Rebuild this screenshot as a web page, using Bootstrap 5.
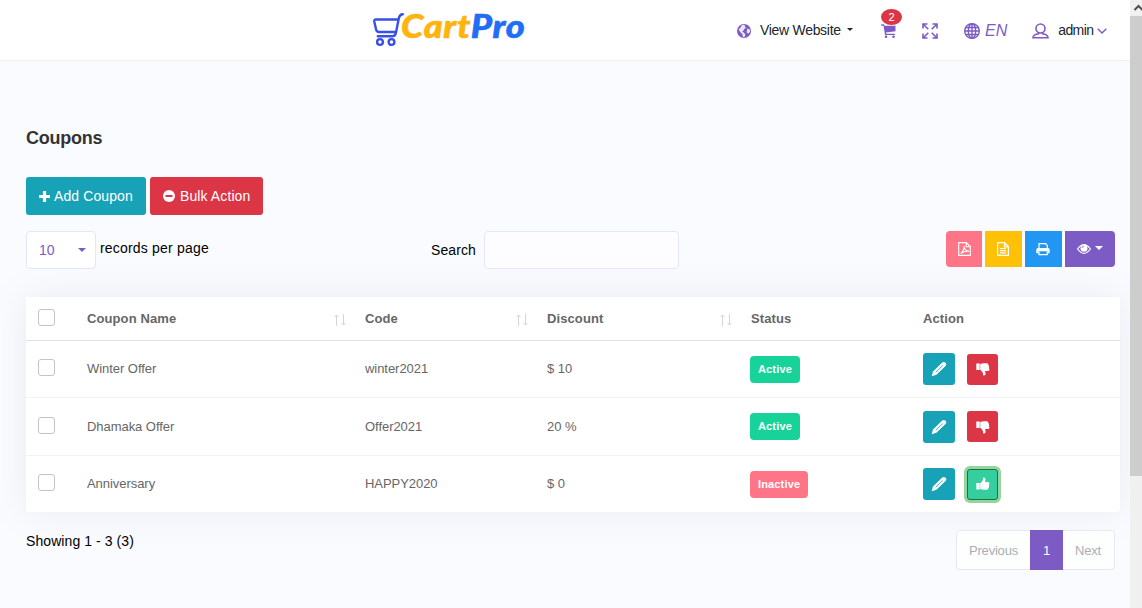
<!DOCTYPE html>
<html lang="en">
<head>
<meta charset="utf-8">
<meta name="viewport" content="width=device-width, initial-scale=1">
<title>Coupons - CartPro</title>
<link href="https://cdn.jsdelivr.net/npm/bootstrap@5.3.0/dist/css/bootstrap.min.css" rel="stylesheet">
<style>
  :root { --violet: #7c5cc4; --teal: #17a2b8; --red: #dc3545; }
  body { font-family: "Liberation Sans", Arial, sans-serif; font-size: 14px; line-height: 20px; height: 608px; overflow: hidden; background: #fafbfe; color: #000; }
  svg { display: block; flex: none; }
  .topbar { height: 61px; border-bottom: 1px solid #eee; background: #fff; padding-left: 373px; color: #212529; }
  .topbar .tools { color: var(--violet); padding-top: 20px; }
  .topbar .label { letter-spacing: -.3px; color: #212529; }
  .logo-text { font: italic 900 32px/34px Lato, sans-serif; letter-spacing: .6px; color: #ffb30d; transform: scaleX(1.13); transform-origin: 0 0; -webkit-text-stroke: .6px currentColor; }
  .logo-text span { color: #1f6ef5; }
  .cart-count { position: absolute; left: 881px; top: 9px; width: 21px; height: 16px; border-radius: 50%; background: var(--red); color: #fff; font-size: 11px; line-height: 16px; text-align: center; }
  .caret { width: 0; height: 0; border: 4px solid transparent; border-top-color: currentColor; border-bottom: 0; }
  .scrollbar { width: 12px; background: #f0f0f0; }
  .scroll-thumb { height: 460px; background: #cdcdcd; }
  .content { padding: 66px 10px 0 26px; }
  h1 { font-size: 18px; line-height: 22px; font-weight: 700; color: #333; margin: 0 0 28px; letter-spacing: -.25px; }
  .btn { --bs-btn-border-radius: 3px; --bs-btn-font-size: 14px; border: 0; color: #fff; }
  .btn-main { height: 38px; padding: 0 13px; letter-spacing: .1px; }
  .bg-teal, .bg-teal:hover { background: var(--teal); }
  .bg-red, .bg-red:hover { background: var(--red); }
  .bg-violet { background: var(--violet); }
  .page-size { width: 70px; height: 38px; border: 1px solid #e4e6fc; border-radius: 4px; background: #fff; color: var(--violet); padding: 0 9px 0 12px; }
  .search-box { width: 195px; height: 38px; border: 1px solid #e4e6fc; border-radius: 4px; background: #fdfdff; }
  .tool { width: 37px; height: 36px; padding: 0; display: flex; align-items: center; justify-content: center; border-radius: 0; }
  .sheet { box-shadow: 0 0 35px rgba(120,130,160,.13); border-radius: 0 0 4px 4px; background: #fff; width: 1094px; }
  .coupons { table-layout: fixed; border-collapse: separate; border-spacing: 0; width: 1094px; margin: 0; font-size: 13px; line-height: 18px; --bs-table-bg: transparent; }
  .coupons th, .coupons td { padding: 0 12px; color: #666; vertical-align: middle; border-bottom: 1px solid #f1f2f4; }
  .coupons th { height: 44px; border-bottom-color: #dee2e6; letter-spacing: .1px; }
  .coupons td { height: 57px; letter-spacing: -.05px; }
  .coupons tbody tr:nth-child(2) td { height: 58px; }
  .coupons tbody tr:last-child td { border-bottom: 0; height: 56px; }
  .tick { display: block; width: 17px; height: 17px; border: 1px solid #c4c4c4; border-radius: 3px; background: #fff; margin-top: -3px; }
  .coupons th .tick { margin-top: -2px; }
  .sorter { margin: 4px -6px 0 0; }
  .state { display: inline-block; height: 27px; line-height: 27px; padding: 0 8px; border-radius: 4px; color: #fff; font-size: 11px; font-weight: 700; margin-left: -1px; vertical-align: middle; letter-spacing: .15px; }
  .act { width: 32px; height: 32px; padding: 0; display: flex; align-items: center; justify-content: center; }
  .act.vote { width: 31px; height: 31px; }
  .act.up { background: #34ce9f; border: 1px solid #1c7430; box-shadow: 0 0 0 3px #93d4a0; }
  .pager { height: 40px; }
  .pager .page-link { height: 40px; padding: 0 12px; line-height: 40px; font-size: 13px; color: #aaaeb3; background: #fdfefe; border-color: #e6e8ee; letter-spacing: -.2px; }
  .pager .page-item:first-child .page-link { width: 75px; border-radius: 4px 0 0 4px; }
  .pager .page-item:last-child .page-link { width: 53px; border-radius: 0 4px 4px 0; }
  .pager .active .page-link { background: var(--violet); border-color: var(--violet); color: #fff; width: 33px; }
</style>
</head>
<body class="d-flex">
<svg width="0" height="0" class="position-absolute">
  <defs>
    <symbol id="pencil" viewBox="0 0 16 16"><path d="M.7 15.200l1.300-4.800L11 1.800q1.800-1.400 3.200-.2l.8.800q.8 1.200-.5 2.700L5.400 13.700z" fill="#fff"/><path d="M4.800 11.200L11.800 4.500" stroke="#17a2b8" stroke-width=".8"/></symbol>
    <symbol id="thumb" viewBox="0 0 14 14"><path d="M.3 6h3.400v6.500H.3zM4.200 6.200Q6 5 7 2.800V1.200Q7 .3 8 .4q1.700.3 1.600 2.200L9 5.100h3q1.600.1 1.500 1.500l-.5.900q.5.900-.1 1.700.3 1-.5 1.700.1 1.800-1.800 1.800H8q-1.700 0-3.800-.7z" fill="#fff"/></symbol>
    <symbol id="sort" viewBox="0 0 14 12"><path d="M3.500 12V1M1.500 3.200L3.500 1l2 2.200M10.500 0v11M8.500 8.800l2 2.200 2-2.200" fill="none" stroke="#d6d6da" stroke-width="1"/></symbol>
  </defs>
</svg>
<div class="flex-grow-1">
  <header class="topbar d-flex position-relative">
    <div class="d-flex" style="width:363px">
      <svg class="mt-2" width="32" height="40" viewBox="0 0 32 40" fill="none" stroke="#3650e8" stroke-width="2.400" stroke-linecap="round" stroke-linejoin="round"><path d="M29.800 6.300q-3.100.1-3.900 3.700L22.800 25.200q-.6 3-3.600 3H4.800M24.300 11.500H3q-2 .1-1.700 2.200l1.800 7.800q.5 2.500 3 2.500h17"/><circle cx="7" cy="34" r="2.900"/><circle cx="18.500" cy="34" r="2.900"/></svg>
      <div class="logo-text" style="margin:9px 0 0 -4px">Cart<span>Pro</span></div>
    </div>
    <div class="tools d-flex align-items-start flex-grow-1">
      <svg style="margin:4px 0 0 1px" width="14" height="14" viewBox="0 0 14 14"><circle cx="7" cy="7" r="7" fill="#7c5cc4"/><path d="M4.500 1.500l2-.7 1.700.8-.5 1.500 1.500.5L7 5.200 6.300 7l-1.500.8 2 .8 1.600 1.800-1 2.800-1.500-.2-.5-2.800L3.200 8 1.600 5.200l1.700-1.300zM10.500 4.500l2 .8.700 2-1.700 2.500-2-1.500z" fill="#fff" opacity=".85"/></svg>
      <span class="label" style="margin-left:9px;width:80px;white-space:nowrap">View Website</span>
      <i class="caret text-dark" style="margin:8px 0 0 7px;border-width:3px 3px 0"></i>
      <svg style="margin:4px 0 0 28px" width="15" height="14" viewBox="0 0 15 14" fill="#7c5cc4"><path d="M0 1Q0 .3.700.3H3l.5 1.500H14.500v5.500L5 8.500l.2 1.300h8.600v1.300H4L2.500 1.700H.7Q0 1.700 0 1z"/><circle cx="5" cy="12.700" r="1.300"/><circle cx="12.500" cy="12.700" r="1.300"/></svg>
      <svg style="margin:3px 0 0 26px" width="16" height="16" viewBox="0 0 16 16" fill="none" stroke="#7c5cc4" stroke-width="1.600"><path d="M1 5.500V1h4.500M10.500 1H15v4.500M15 10.500V15h-4.500M5.500 15H1v-4.500M1 1l5.300 5.300M15 1L9.700 6.300M15 15L9.700 9.700M1 15l5.300-5.300"/></svg>
      <svg style="margin:3px 0 0 26px" width="16" height="16" viewBox="0 0 16 16" fill="none" stroke="#7c5cc4" stroke-width="1.400"><circle cx="8" cy="8" r="7.300"/><ellipse cx="8" cy="8" rx="3.700" ry="7.300"/><path d="M8 .7v14.600M.7 8h14.600M1.700 4.500h12.600M1.700 11.500h12.600"/></svg>
      <i style="font-size:16px;margin:1px 0 0 5px">EN</i>
      <svg style="margin:3px 0 0 25px" width="17" height="16" viewBox="0 0 17 16" fill="none" stroke="#7c5cc4" stroke-width="1.600"><circle cx="8.500" cy="5.500" r="4.500"/><path d="M6.500 9.500v1.300Q1.500 11.500 1 14.700h15Q15.500 11.500 10.500 10.800V9.500"/></svg>
      <span class="label" style="margin-left:9px;width:35px;letter-spacing:-.6px">admin</span>
      <svg style="margin:8px 0 0 4px" width="10" height="6" viewBox="0 0 10 6" fill="none" stroke="#7c5cc4" stroke-width="1.400"><path d="M.7.700L5 5 9.300.700"/></svg>
    </div>
    <span class="cart-count">2</span>
  </header>
  <main class="content">
    <h1>Coupons</h1>
    <div class="d-flex gap-1">
      <button class="btn btn-main bg-teal d-flex align-items-center" style="width:120px"><svg width="11" height="11" viewBox="0 0 11 11"><path d="M5.500 0v11M0 5.500h11" stroke="#fff" stroke-width="3.200"/></svg><span class="ms-1 text-nowrap">Add Coupon</span></button>
      <button class="btn btn-main bg-red d-flex align-items-center" style="width:113px"><svg width="12" height="12" viewBox="0 0 12 12"><circle cx="6" cy="6" r="6" fill="#fff"/><path d="M2.500 6h7" stroke="#dc3545" stroke-width="2"/></svg><span class="text-nowrap" style="margin-left:5px">Bulk Action</span></button>
    </div>
    <div class="d-flex mt-3" style="height:66px">
      <div class="page-size d-flex align-items-center justify-content-between"><span>10</span><i class="caret"></i></div>
      <span style="margin:7px 0 0 4px;width:331px;letter-spacing:.19px">records per page</span>
      <span style="margin:9px 0 0;width:53px;letter-spacing:.1px">Search</span>
      <div class="search-box"></div>
      <div class="d-flex ms-auto me-1" style="gap:3px;padding-right:1px">
        <button class="btn tool rounded-start-1" style="background:#ff7588;width:36px"><svg width="13" height="14" viewBox="0 0 13 14" fill="none" stroke="#fff" stroke-width="1.100"><path d="M.7.600h7.600l4 4v8.800H.7zM8.200.600v4.200h4M2.700 11.500Q6.500 8.500 6 4q0 4.500 5 5.400-4-.7-8.300 2.100z"/></svg></button>
        <button class="btn tool" style="background:#ffc107"><svg width="12" height="14" viewBox="0 0 12 14" fill="none" stroke="#fff" stroke-width="1.200" style="margin-left:-1px"><path d="M.6.600h6.900l3.900 4v8.800H.6zM7.500.600v4.200h3.900M3 6.500h6M3 8.700h6M3 10.900h6"/></svg></button>
        <button class="btn tool" style="background:#2196f3"><svg width="14" height="14" viewBox="0 0 14 14" style="margin-left:-1px"><path d="M3 6V1.600h6.500L11.300 3.500V6" fill="none" stroke="#fff" stroke-width="1.200"/><path d="M2 6h10q1.700 0 1.700 1.700v3.500H11.500V9.300h-9v1.900H.3V7.700Q.3 6 2 6z" fill="#fff"/><path d="M3 9.500v3.200h8.300V9.500" fill="none" stroke="#fff" stroke-width="1.200"/></svg></button>
        <button class="btn tool bg-violet rounded-end-1" style="width:50px"><svg width="14" height="12" viewBox="0 0 14 12"><path d="M.6 6Q7-2.800 13.400 6 7 14.800.6 6z" fill="none" stroke="#fff" stroke-width="1.200"/><circle cx="7" cy="5.300" r="3.500" fill="#fff"/><path d="M5 5q0-2 2-2" stroke="#7c5cc4" fill="none" stroke-width=".8"/></svg><i class="caret" style="margin:-2px 0 0 4px"></i></button>
      </div>
    </div>
    <div class="sheet">
      <table class="table coupons">
        <colgroup><col style="width:49px"><col style="width:278px"><col style="width:182px"><col style="width:204px"><col style="width:172px"><col style="width:209px"></colgroup>
        <thead><tr>
          <th><i class="tick"></i></th>
          <th><div class="d-flex justify-content-between">Coupon Name<svg class="sorter" width="14" height="12"><use href="#sort"/></svg></div></th>
          <th><div class="d-flex justify-content-between">Code<svg class="sorter" width="14" height="12"><use href="#sort"/></svg></div></th>
          <th><div class="d-flex justify-content-between">Discount<svg class="sorter" width="14" height="12"><use href="#sort"/></svg></div></th>
          <th>Status</th><th>Action</th>
        </tr></thead>
        <tbody>
          <tr><td><i class="tick"></i></td><td>Winter Offer</td><td>winter2021</td><td>$ 10</td><td><span class="state" style="background:#17d39a">Active</span></td>
            <td><div class="d-flex align-items-center" style="gap:12px"><button class="btn act bg-teal"><svg width="16" height="16"><use href="#pencil"/></svg></button><button class="btn act vote bg-red"><svg width="14" height="14" style="transform:scaleY(-1)"><use href="#thumb"/></svg></button></div></td></tr>
          <tr><td><i class="tick"></i></td><td>Dhamaka Offer</td><td>Offer2021</td><td>20 %</td><td><span class="state" style="background:#17d39a">Active</span></td>
            <td><div class="d-flex align-items-center" style="gap:12px"><button class="btn act bg-teal"><svg width="16" height="16"><use href="#pencil"/></svg></button><button class="btn act vote bg-red"><svg width="14" height="14" style="transform:scaleY(-1)"><use href="#thumb"/></svg></button></div></td></tr>
          <tr><td><i class="tick"></i></td><td>Anniversary</td><td>HAPPY2020</td><td>$ 0</td><td><span class="state" style="background:#ff7588">Inactive</span></td>
            <td><div class="d-flex align-items-center" style="gap:12px"><button class="btn act bg-teal"><svg width="16" height="16"><use href="#pencil"/></svg></button><button class="btn act vote up"><svg width="14" height="14"><use href="#thumb"/></svg></button></div></td></tr>
        </tbody>
      </table>
    </div>
    <div class="d-flex justify-content-between" style="padding:18px 5px 0 0">
      <span style="margin-top:1px;letter-spacing:.08px">Showing 1 - 3 (3)</span>
      <ul class="pagination pager mb-0">
        <li class="page-item"><a class="page-link">Previous</a></li>
        <li class="page-item active"><a class="page-link">1</a></li>
        <li class="page-item"><a class="page-link">Next</a></li>
      </ul>
    </div>
  </main>
</div>
<div class="scrollbar d-flex flex-column flex-shrink-0">
  <svg width="12" height="16" viewBox="0 0 12 16" fill="none" stroke="#505050" stroke-width="2"><path d="M4.500 10L8.500 6l4 4"/></svg>
  <div class="scroll-thumb"></div>
</div>
<script src="https://cdn.jsdelivr.net/npm/bootstrap@5.3.0/dist/js/bootstrap.bundle.min.js"></script>
</body>
</html>
